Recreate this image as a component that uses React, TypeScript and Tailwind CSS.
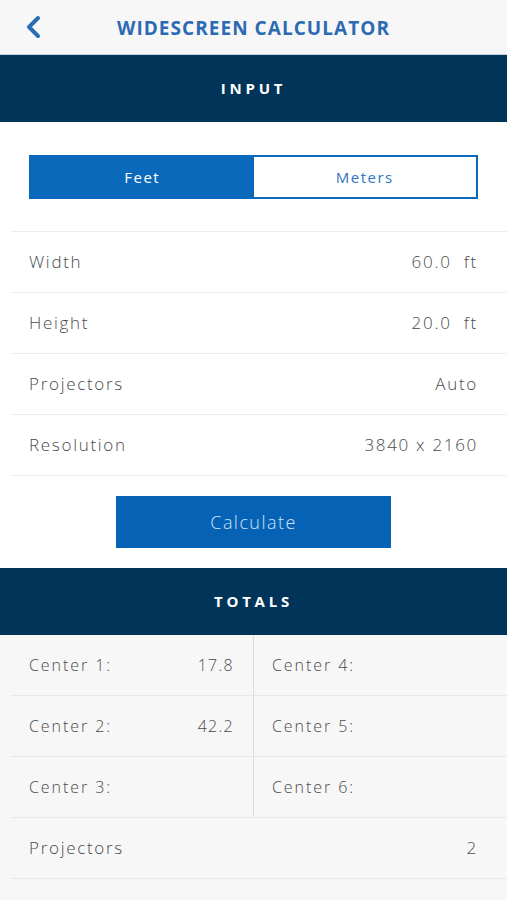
import React from "react";

const font = { fontFamily: '"Open Sans", "DejaVu Sans", sans-serif' };

function Row({ label, value }: { label: string; value: string }) {
  return (
    <div className="ml-[11px] flex h-[61px] items-center justify-between border-b border-[#ececec] pl-[18px] pr-[29px]">
      <span className="text-[17px] font-light tracking-[0.1em] text-[#4a4a4a]">{label}</span>
      <span className="whitespace-pre text-[17px] font-light tracking-[0.1em] text-[#4a4a4a]">{value}</span>
    </div>
  );
}

function Cell({ label, value, left }: { label: string; value?: string; left?: boolean }) {
  return (
    <div
      className={`flex h-[61px] items-center justify-between border-b border-[#e8e8e8] ${
        left ? "ml-[11px] border-r border-r-[#dcdcdc] pl-[18px] pr-[19px]" : "pl-[18px] pr-[29px]"
      }`}
    >
      <span className="text-[16px] font-light tracking-[0.12em] text-[#4a4a4a]">{label}</span>
      <span className="text-[16px] font-light tracking-[0.08em] text-[#4a4a4a]">{value ?? ""}</span>
    </div>
  );
}

export default function App() {
  return (
    <div className="min-h-[900px] w-[507px] bg-white" style={font}>
      <div className="relative flex h-[55px] items-center justify-center border-b border-[#bcd3e6] bg-[#f7f7f7] pt-[3px]">
        <svg
          className="absolute left-[25px] top-[15px]"
          width="18"
          height="24"
          viewBox="0 0 18 24"
          fill="none"
          stroke="#2c6db5"
          strokeWidth="4"
          strokeLinecap="round"
          strokeLinejoin="round"
        >
          <path d="M13 3 L4 12 L13 21" />
        </svg>
        <span className="text-[19px] font-bold tracking-[0.055em] text-[#2c6ab3]">WIDESCREEN CALCULATOR</span>
      </div>

      <div className="flex h-[67px] items-center justify-center bg-[#003459]">
        <span className="text-[15px] font-bold tracking-[0.25em] text-white">INPUT</span>
      </div>

      <div className="bg-white pb-[20px]">
        <div className="px-[29px] pb-[32px] pt-[33px]">
          <div className="flex h-[44px] border-2 border-[#0a69bb]">
            <div className="flex flex-1 items-center justify-center bg-[#0a69bb] text-[15px] tracking-[0.1em] text-white">
              Feet
            </div>
            <div className="flex flex-1 items-center justify-center bg-white text-[15px] tracking-[0.1em] text-[#2d75c0]">
              Meters
            </div>
          </div>
        </div>
        <div className="ml-[11px] border-t border-[#ececec]" />
        <Row label="Width" value="60.0  ft" />
        <Row label="Height" value="20.0  ft" />
        <Row label="Projectors" value="Auto" />
        <Row label="Resolution" value="3840 x 2160" />
        <div className="flex justify-center pt-[20px]">
          <div className="flex h-[52px] w-[275px] items-center justify-center bg-[#0562b5] text-[18px] font-light tracking-[0.08em] text-[#cfe2f5]">
            Calculate
          </div>
        </div>
      </div>

      <div className="flex h-[67px] items-center justify-center bg-[#003459]">
        <span className="text-[15px] font-bold tracking-[0.25em] text-white">TOTALS</span>
      </div>

      <div className="bg-[#f7f7f7] pb-[21px]">
        <div className="grid grid-cols-[254px_1fr]">
          <Cell left label="Center 1:" value="17.8" />
          <Cell label="Center 4:" />
          <Cell left label="Center 2:" value="42.2" />
          <Cell label="Center 5:" />
          <Cell left label="Center 3:" />
          <Cell label="Center 6:" />
        </div>
        <div className="ml-[11px] flex h-[61px] items-center justify-between border-b border-[#e8e8e8] pl-[18px] pr-[29px]">
          <span className="text-[17px] font-light tracking-[0.1em] text-[#4a4a4a]">Projectors</span>
          <span className="text-[17px] font-light tracking-[0.1em] text-[#4a4a4a]">2</span>
        </div>
      </div>
    </div>
  );
}
